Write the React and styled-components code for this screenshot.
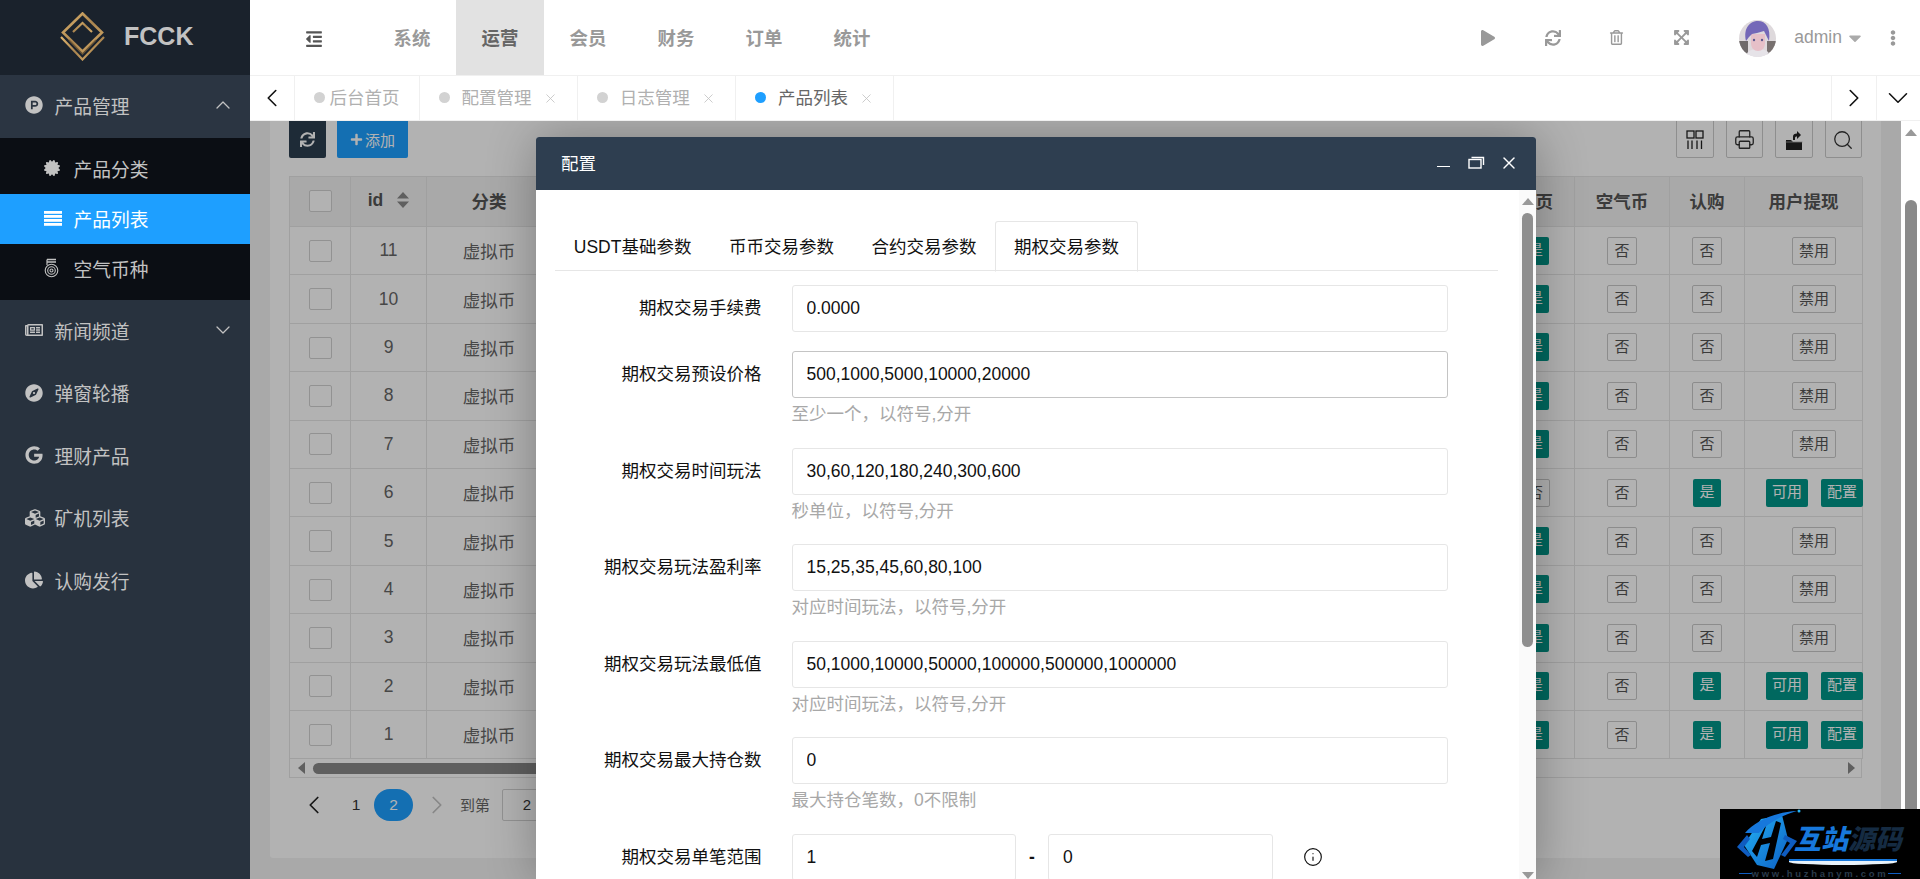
import React from 'react';
import styled, { createGlobalStyle } from 'styled-components';
import { ChevronDown, ChevronLeft, ChevronRight, ChevronUp, Info, Printer, Search, X } from 'lucide-react';
import {
  FaCaretDown,
  FaCertificate,
  FaChartPie,
  FaCompass,
  FaCubes,
  FaEllipsisV,
  FaExpandArrowsAlt,
  FaGoogle,
  FaOutdent,
  FaPlay,
  FaPlus,
  FaProductHunt,
  FaRegNewspaper,
  FaRegTrashAlt,
  FaSync,
} from 'react-icons/fa';

const GlobalStyle = createGlobalStyle`
  html, body {
    margin: 0;
    height: 100%;
    overflow: hidden;
    background: #fff;
  }
  body, input, button {
    font-family: "Liberation Sans", "Noto Sans CJK SC", sans-serif;
  }
  * {
    box-sizing: border-box;
  }
`;

const Shell = styled.div`
  position: relative;
  display: flex;
  width: 1920px;
  height: 879px;
  overflow: hidden;
`;

/* left menu */
const Sidebar = styled.aside`
  flex: 0 0 250px;
  background: #28323e;
  color: #c2c2c2;
`;

const Brand = styled.div`
  display: flex;
  align-items: center;
  height: 75px;
  padding: 0 0 2px 60px;
  background: #1a222c;
`;

const BrandName = styled.span`
  margin-left: 19px;
  font-size: 25px;
  font-weight: 700;
  color: #c2c2c2;
`;

const MenuRow = styled.div`
  display: flex;
  align-items: center;
  height: ${(p) => (p.$open ? '63px' : '62.5px')};
  padding: 0 15px ${(p) => (p.$open ? '3px' : '2px')} 25px;
  font-size: 18.75px;
  background: ${(p) => (p.$open ? '#2b3542' : 'transparent')};
  > svg {
    margin-left: auto;
  }
`;

const MenuIcon = styled.span`
  display: flex;
  align-items: center;
  flex: 0 0 29.5px;
  font-size: 18px;
`;

const SubMenu = styled.div`
  padding: 6px 0;
  background: #0b0e14;
`;

const SubRow = styled.div`
  display: flex;
  align-items: center;
  height: 50px;
  padding: 0 0 2px 44px;
  font-size: 18.75px;
  background: ${(p) => (p.$active ? '#1e9fff' : 'transparent')};
  color: ${(p) => (p.$active ? '#fff' : '#c2c2c2')};
`;

const SubIcon = styled.span`
  display: flex;
  align-items: center;
  flex: 0 0 29.5px;
  font-size: 16px;
`;

/* top bar */
const Main = styled.div`
  display: flex;
  flex: 1;
  flex-direction: column;
  min-width: 0;
`;

const TopBar = styled.header`
  display: flex;
  align-items: center;
  flex: 0 0 75px;
  background: #fff;
`;

const Toggle = styled.div`
  display: flex;
  align-items: center;
  justify-content: center;
  width: 118px;
  padding: 2px 0 0 10px;
  font-size: 18px;
  color: #555;
`;

const NavItem = styled.div`
  display: flex;
  align-items: center;
  justify-content: center;
  width: 88px;
  height: 75px;
  padding-bottom: 1px;
  font-size: 18.4px;
  font-weight: 700;
  color: ${(p) => (p.$active ? '#666' : '#999')};
  background: ${(p) => (p.$active ? '#e2e2e2' : 'transparent')};
`;

const TopTools = styled.div`
  display: flex;
  align-items: center;
  margin-left: auto;
  padding-right: 19px;
  color: #999;
`;

const TopTool = styled.div`
  display: flex;
  align-items: center;
  justify-content: center;
  width: 64.25px;
`;

const AvatarWrap = styled.div`
  display: flex;
  width: 37px;
  height: 37px;
  margin: 2px 18px 0 26px;
`;

const UserName = styled.span`
  font-size: 17.5px;
  color: #999;
`;

const Caret = styled.span`
  display: flex;
  margin: 0 20px 0 3px;
  font-size: 20px;
  color: #aaa;
`;

/* open page tabs */
const TabStrip = styled.nav`
  display: flex;
  align-items: stretch;
  flex: 0 0 46px;
  border-top: 1px solid #f0f0f0;
  border-bottom: 1px solid #f0f0f0;
  background: #fff;
`;

const TabArrow = styled.div`
  display: flex;
  align-items: center;
  justify-content: center;
  width: 44.5px;
  color: #111;
  border-left: ${(p) => (p.$end ? '1px solid #f0f0f0' : 'none')};
  border-right: ${(p) => (p.$end ? 'none' : '1px solid #f0f0f0')};
`;

const PageTab = styled.div`
  display: flex;
  align-items: center;
  padding: 0 19px 3px;
  font-size: 17.5px;
  color: ${(p) => (p.$active ? '#666' : '#b0b0b0')};
  border-right: 1px solid #f0f0f0;
`;

const TabDot = styled.i`
  width: 11px;
  height: 11px;
  margin: 2px ${(p) => (p.$tight ? '5px' : '12px')} 0 0;
  border-radius: 50%;
  background: ${(p) => (p.$active ? '#1e9fff' : '#d2d2d2')};
`;

const TabClose = styled.span`
  display: flex;
  margin: 3px 0 0 11.3px;
  color: #c2c2c2;
`;

const TabGap = styled.div`
  flex: 1;
`;

/* content behind the dialog */
const Frame = styled.div`
  position: relative;
  flex: 1;
  display: flex;
  min-height: 0;
  overflow: hidden;
  background: #f2f2f2;
`;

const PageArea = styled.div`
  display: flex;
  flex: 1;
  flex-direction: column;
  min-width: 0;
  padding: 0 20px 21px;
`;

const Card = styled.section`
  flex: 1;
  margin-top: -8px;
  padding: 0 19px;
  border-radius: 3px;
  background: #fff;
`;

const Toolbar = styled.div`
  display: flex;
  align-items: center;
  height: 45px;
  margin-bottom: 18px;
`;

const RefreshBtn = styled.button`
  display: flex;
  align-items: center;
  justify-content: center;
  width: 37px;
  height: 45px;
  padding: 8px 0 0;
  border: 0;
  border-radius: 2px;
  font-size: 15px;
  color: #fff;
  background: #2c3e50;
`;

const AddBtn = styled.button`
  display: flex;
  align-items: center;
  justify-content: center;
  width: 71px;
  height: 45px;
  margin-left: 11px;
  padding: 8px 0 0;
  border: 0;
  border-radius: 2px;
  font-size: 15px;
  color: #fff;
  background: #1e9fff;
  svg {
    margin-right: 2px;
    font-size: 13px;
  }
`;

const ToolGroup = styled.div`
  display: flex;
  gap: 12px;
  margin-left: auto;
`;

const ToolBtn = styled.div`
  display: flex;
  align-items: center;
  justify-content: center;
  width: 37.5px;
  height: 45px;
  padding-top: 8px;
  border: 1px solid #ccc;
  border-radius: 2px;
  color: #333;
`;

const TableBox = styled.div`
  width: 1573px;
  border-top: 1px solid #e6e6e6;
`;

const Table = styled.table`
  width: 1573px;
  table-layout: fixed;
  border-collapse: collapse;
`;

const HeadCell = styled.th`
  height: 49.5px;
  padding: 0 0 2px;
  font-size: 17.5px;
  font-weight: 700;
  color: #555;
  text-align: center;
  background: #f2f2f2;
  border: 1px solid #e6e6e6;
  border-top: 0;
`;

const Cell = styled.td`
  height: 48.4px;
  padding: 0 0 0 ${(p) => (p.$action ? '21px' : '0')};
  font-size: 17.5px;
  color: #666;
  text-align: center;
  white-space: nowrap;
  border: 1px solid #e6e6e6;
`;

const Check = styled.i`
  display: inline-block;
  width: 23px;
  height: 22px;
  vertical-align: middle;
  border: 1px solid #d2d2d2;
  border-radius: 2px;
  background: #fff;
`;

const SortMark = styled.svg`
  width: 12px;
  height: 16px;
  margin-left: 14px;
  vertical-align: -2px;
`;

const Tag = styled.span`
  display: inline-block;
  height: 28px;
  padding: 0 6px;
  font-size: 15px;
  line-height: 26px;
  border-radius: 2px;
  color: ${(p) => (p.$on ? '#fff' : '#555')};
  background: ${(p) => (p.$on ? '#009688' : 'transparent')};
  border: ${(p) => (p.$on ? '0' : '1px solid #c9c9c9')};
  & + & {
    margin-left: 13px;
  }
`;

const HScroll = styled.div`
  display: flex;
  align-items: center;
  height: 19px;
  padding: 0 6px 0 8px;
  border: 1px solid #e6e6e6;
  border-top: 0;
`;

const ArrowLeft = styled.i`
  border-style: solid;
  border-width: 6px 7px 6px 0;
  border-color: transparent #888 transparent transparent;
`;

const ArrowRight = styled.i`
  margin-left: auto;
  border-style: solid;
  border-width: 6px 0 6px 7px;
  border-color: transparent transparent transparent #888;
`;

const HThumb = styled.div`
  width: 900px;
  height: 11px;
  margin-left: 8px;
  border-radius: 6px;
  background: #888;
`;

const Pager = styled.div`
  display: flex;
  align-items: center;
  height: 33px;
  margin-top: 10px;
  padding-left: 10px;
  font-size: 15px;
  color: #666;
`;

const PageNo = styled.span`
  display: flex;
  align-items: center;
  justify-content: center;
  width: ${(p) => (p.$current ? '39px' : '36px')};
  height: 32px;
  margin-left: ${(p) => (p.$current ? '0' : '9px')};
  border-radius: 16px;
  font-size: 15.5px;
  color: ${(p) => (p.$current ? '#fff' : '#333')};
  background: ${(p) => (p.$current ? '#1e9fff' : 'transparent')};
`;

const PagerNext = styled.span`
  display: flex;
  margin-left: 9px;
  color: #c2c2c2;
`;

const PagerLabel = styled.span`
  margin: 0 12px 0 8px;
  color: #666;
`;

const PagerInput = styled.span`
  display: flex;
  align-items: center;
  justify-content: center;
  width: 50px;
  height: 32px;
  border: 1px solid #d2d2d2;
  border-radius: 2px;
  color: #333;
`;

const PageBar = styled.div`
  position: relative;
  z-index: 3;
  display: flex;
  flex-direction: column;
  align-items: center;
  flex: 0 0 19px;
  padding-top: 8px;
  background: #fff;
`;

const BarArrowUp = styled.i`
  flex: none;
  border-style: solid;
  border-width: 0 6.5px 7px;
  border-color: transparent transparent #999;
`;

const BarArrowDown = styled.i`
  flex: none;
  margin-top: auto;
  border-style: solid;
  border-width: 7px 6.5px 0;
  border-color: #999 transparent transparent;
`;

const PageThumb = styled.div`
  flex: 1;
  width: 12px;
  margin: 64px 0 0 1px;
  border-radius: 6px 6px 0 0;
  background: #8a8a8a;
`;

const Shade = styled.div`
  position: absolute;
  inset: 0;
  z-index: 1;
  background: rgba(0, 0, 0, 0.3);
`;

/* dialog */
const Dialog = styled.div`
  position: absolute;
  top: 16px;
  left: 286px;
  z-index: 2;
  display: flex;
  flex-direction: column;
  width: 1000px;
  height: 742px;
  border-radius: 3px 3px 0 0;
  background: #fff;
  box-shadow: 1px 1px 50px rgba(0, 0, 0, 0.3);
`;

const DialogHead = styled.div`
  display: flex;
  align-items: center;
  flex: 0 0 53px;
  padding: 0 17px 2px 25px;
  font-size: 17.5px;
  color: #fff;
  border-radius: 3px 3px 0 0;
  background: #2e3e50;
`;

const DialogTools = styled.div`
  display: flex;
  align-items: center;
  margin-left: auto;
`;

const MinLine = styled.i`
  width: 13px;
  height: 1.5px;
  margin: 8px 18px 0 0;
  background: #fff;
`;

const DialogBody = styled.div`
  display: flex;
  flex: 1;
  min-height: 0;
`;

const DialogScroll = styled.div`
  flex: 1;
  min-width: 0;
  padding: 31px 21px 0 19px;
  overflow: hidden;
`;

const DialogBar = styled.div`
  display: flex;
  flex-direction: column;
  align-items: center;
  flex: 0 0 17px;
  padding: 8px 0 0;
  background: #fafafa;
`;

const DialogThumb = styled.div`
  flex: none;
  width: 11px;
  height: 434px;
  margin-top: 8px;
  border-radius: 6px;
  background: #8f8f8f;
`;

const FormTabs = styled.div`
  display: flex;
  height: 50px;
  border-bottom: 1px solid #e6e6e6;
`;

const FormTab = styled.div`
  display: flex;
  align-items: center;
  justify-content: center;
  height: 51px;
  padding: 0 17.75px 3px;
  font-size: 17.5px;
  color: #111;
  border: 1px solid ${(p) => (p.$active ? '#e6e6e6' : 'transparent')};
  border-bottom-color: ${(p) => (p.$active ? '#fff' : 'transparent')};
  border-radius: 3px 3px 0 0;
`;

const Form = styled.div`
  padding-top: 14px;
`;

const FormRow = styled.div`
  display: grid;
  grid-template-columns: 206.5px 656px;
  column-gap: 30px;
  margin-bottom: 19px;
`;

const FormLabel = styled.label`
  height: 47px;
  font-size: 17.5px;
  line-height: 46px;
  color: #111;
  text-align: right;
`;

const FieldInput = styled.input`
  display: block;
  width: ${(p) => (p.$half ? '224.5px' : '100%')};
  height: 47px;
  padding: 0 14px;
  font-size: 17.5px;
  color: #111;
  border: 1px solid ${(p) => (p.$focus ? '#c4c4c4' : '#e6e6e6')};
  border-radius: 3px;
  outline: 0;
  background: #fff;
`;

const FieldHelp = styled.div`
  height: 30.5px;
  font-size: 17.5px;
  line-height: 32px;
  color: #a8a8a8;
`;

const RangeWrap = styled.div`
  display: flex;
  align-items: center;
  width: 700px;
  color: #111;
`;

const RangeDash = styled.span`
  flex: 0 0 32px;
  font-size: 17.5px;
  font-weight: 700;
  text-align: center;
`;

const RangeInfo = styled.span`
  display: flex;
  margin-left: 30px;
`;

/* corner stamp */
const Stamp = styled.div`
  position: absolute;
  right: 0;
  bottom: 0;
  z-index: 9;
  width: 200px;
  height: 70px;
  background: #000;
`;

const StampMark = styled.svg`
  position: absolute;
  top: 0;
  left: 15px;
  width: 66px;
  height: 64px;
`;

const StampTitle = styled.div`
  position: absolute;
  top: 15px;
  left: 74px;
  font-size: 27px;
  line-height: 32px;
  font-weight: 900;
  font-style: italic;
  white-space: nowrap;
  color: #152b42;
  b {
    color: #1778dc;
    font-weight: 900;
  }
`;

const StampSwoosh = styled.div`
  position: absolute;
  top: 50px;
  left: 69px;
  width: 108px;
  height: 6px;
  border-radius: 0 0 50% 50%;
  border-top: 2px solid #1778dc;
  background: #e9f3fb;
`;

const StampUrl = styled.div`
  position: absolute;
  left: 19px;
  right: 19px;
  bottom: 0;
  display: flex;
  align-items: center;
  justify-content: space-between;
  height: 11px;
  font-size: 9.5px;
  font-weight: 700;
  letter-spacing: 2.7px;
  white-space: nowrap;
  color: #2a3b4b;
  &::before,
  &::after {
    content: '';
    width: 16px;
    height: 1.5px;
    background: #0f5cc0;
  }
`;

const ROWS = [
  { id: 11 }, { id: 10 }, { id: 9 }, { id: 8 }, { id: 7 },
  { id: 6, on: true, homeOff: true },
  { id: 5 }, { id: 4 }, { id: 3 },
  { id: 2, on: true }, { id: 1, on: true },
];

const FIELDS = [
  { label: '期权交易手续费', value: '0.0000' },
  { label: '期权交易预设价格', value: '500,1000,5000,10000,20000', help: '至少一个，以符号,分开', focus: true },
  { label: '期权交易时间玩法', value: '30,60,120,180,240,300,600', help: '秒单位，以符号,分开' },
  { label: '期权交易玩法盈利率', value: '15,25,35,45,60,80,100', help: '对应时间玩法，以符号,分开' },
  { label: '期权交易玩法最低值', value: '50,1000,10000,50000,100000,500000,1000000', help: '对应时间玩法，以符号,分开' },
  { label: '期权交易最大持仓数', value: '0', help: '最大持仓笔数，0不限制' },
];

const NAV = ['系统', '运营', '会员', '财务', '订单', '统计'];

const LogoMark = () => (
  <svg width="45" height="49" viewBox="0 0 45 49" fill="none">
    <defs>
      <linearGradient id="gold" x1="0" y1="0" x2="1" y2="1">
        <stop offset="0" stopColor="#e0b56e" />
        <stop offset="0.5" stopColor="#a9844f" />
        <stop offset="1" stopColor="#d8ad68" />
      </linearGradient>
    </defs>
    <path d="M22.5 1.5 42 20.5 22.5 39.5 3 20.5Z" stroke="url(#gold)" strokeWidth="2.6" />
    <path d="M13 20 22.5 11 32 20" stroke="url(#gold)" strokeWidth="2.2" />
    <path d="M1 25 22.5 47.5 44 25" stroke="url(#gold)" strokeWidth="2.2" />
    <path d="M9 28 22.5 42 36 28" stroke="#6f5836" strokeWidth="1.4" />
  </svg>
);

const ListIcon = () => (
  <svg width="18" height="15" viewBox="0 0 18 15" fill="currentColor">
    <rect width="18" height="2.8" />
    <rect y="4" width="18" height="2.8" />
    <rect y="8" width="18" height="2.8" />
    <rect y="12" width="18" height="2.8" />
  </svg>
);

const AirIcon = () => (
  <svg width="15" height="20" viewBox="0 0 15 20" fill="none" stroke="currentColor">
    <path d="M3 1.5h9M3 4h9" strokeWidth="1.4" />
    <path d="M3 1.5V7" strokeWidth="1.2" />
    <circle cx="7.5" cy="12.5" r="6.3" strokeWidth="1.1" />
    <circle cx="7.5" cy="12.5" r="3.8" strokeWidth="1.1" />
    <circle cx="7.5" cy="12.5" r="1.5" strokeWidth="1.1" />
  </svg>
);

const Avatar = () => (
  <svg width="37" height="37" viewBox="0 0 37 37">
    <defs>
      <clipPath id="ava">
        <circle cx="18.5" cy="18.5" r="18.5" />
      </clipPath>
    </defs>
    <g clipPath="url(#ava)">
      <rect width="37" height="37" fill="#ded9dc" />
      <rect y="21" width="9" height="16" fill="#6f6a6a" />
      <rect x="28" y="21" width="9" height="16" fill="#77706f" />
      <path d="M7 37c0-6 6-8 12-8s12 2 12 8Z" fill="#e6e3e8" />
      <path d="M12 14h14v9c0 5-3 8-7 8s-7-3-7-8Z" fill="#e6c0c8" />
      <path d="M7 21C4 8 11 1 19 1s13 7 11 20l-3-6-2-4-7 2-5 1-3 3Z" fill="#7468b8" />
      <circle cx="15" cy="20" r="1.2" fill="#5d5a8e" />
      <circle cx="23" cy="20" r="1.2" fill="#5d5a8e" />
    </g>
  </svg>
);

const ColumnsIcon = () => (
  <svg width="18" height="20" viewBox="0 0 18 20" fill="none" stroke="#222" strokeWidth="1.3">
    <rect x="1" y="1" width="7" height="7" />
    <rect x="10" y="1" width="7" height="7" />
    <path d="M2 10.5V19M6 10.5V19M11 10.5V19M15.5 10.5V19" />
  </svg>
);

const ExportIcon = () => (
  <svg width="18" height="22" viewBox="0 0 18 22" fill="#222">
    <path d="M1 11h5l2 2h9v8H1Z" />
    <path d="M8 11V7.5c0-2 1.5-3 4-3V2l4 4-4 4V7.5c-1.5 0-2 .5-2 2V11Z" />
    <path d="M0.5 13h17" stroke="#aaa" strokeWidth="0.8" />
  </svg>
);

const MaxIcon = () => (
  <svg width="17" height="13" viewBox="0 0 17 13" fill="none" stroke="#fff" strokeWidth="1.4" style={{ marginRight: 14 }}>
    <rect x="1" y="3.5" width="12" height="8.5" />
    <path d="M3.5 1.5h12v7.5" />
  </svg>
);

const App = () => (
  <Shell>
    <GlobalStyle />
    <Sidebar>
      <Brand>
        <LogoMark />
        <BrandName>FCCK</BrandName>
      </Brand>
      <MenuRow $open>
        <MenuIcon><FaProductHunt /></MenuIcon>
        产品管理
        <ChevronUp size={24} strokeWidth={1.3} />
      </MenuRow>
      <SubMenu>
        <SubRow><SubIcon><FaCertificate /></SubIcon>产品分类</SubRow>
        <SubRow $active><SubIcon><ListIcon /></SubIcon>产品列表</SubRow>
        <SubRow><SubIcon><AirIcon /></SubIcon>空气币种</SubRow>
      </SubMenu>
      <MenuRow>
        <MenuIcon><FaRegNewspaper /></MenuIcon>
        新闻频道
        <ChevronDown size={24} strokeWidth={1.3} />
      </MenuRow>
      <MenuRow>
        <MenuIcon><FaCompass /></MenuIcon>
        弹窗轮播
      </MenuRow>
      <MenuRow>
        <MenuIcon><FaGoogle /></MenuIcon>
        理财产品
      </MenuRow>
      <MenuRow>
        <MenuIcon><FaCubes size={20} /></MenuIcon>
        矿机列表
      </MenuRow>
      <MenuRow>
        <MenuIcon><FaChartPie /></MenuIcon>
        认购发行
      </MenuRow>
    </Sidebar>

    <Main>
      <TopBar>
        <Toggle><FaOutdent /></Toggle>
        {NAV.map((name) => (
          <NavItem key={name} $active={name === '运营'}>{name}</NavItem>
        ))}
        <TopTools>
          <TopTool><FaPlay size={16} /></TopTool>
          <TopTool><FaSync size={16} /></TopTool>
          <TopTool><FaRegTrashAlt size={15} /></TopTool>
          <TopTool><FaExpandArrowsAlt size={17} /></TopTool>
          <AvatarWrap><Avatar /></AvatarWrap>
          <UserName>admin</UserName>
          <Caret><FaCaretDown /></Caret>
          <FaEllipsisV size={16} />
        </TopTools>
      </TopBar>

      <TabStrip>
        <TabArrow><ChevronLeft size={30} strokeWidth={1.3} /></TabArrow>
        <PageTab><TabDot $tight />后台首页</PageTab>
        <PageTab><TabDot />配置管理<TabClose><X size={15} strokeWidth={1.3} /></TabClose></PageTab>
        <PageTab><TabDot />日志管理<TabClose><X size={15} strokeWidth={1.3} /></TabClose></PageTab>
        <PageTab $active><TabDot $active />产品列表<TabClose><X size={15} strokeWidth={1.3} /></TabClose></PageTab>
        <TabGap />
        <TabArrow $end><ChevronRight size={30} strokeWidth={1.3} /></TabArrow>
        <TabArrow $end><ChevronDown size={34} strokeWidth={1.1} /></TabArrow>
      </TabStrip>

      <Frame>
        <PageArea>
          <Card>
            <Toolbar>
              <RefreshBtn><FaSync /></RefreshBtn>
              <AddBtn><FaPlus />添加</AddBtn>
              <ToolGroup>
                <ToolBtn><ColumnsIcon /></ToolBtn>
                <ToolBtn><Printer size={21} strokeWidth={1.5} /></ToolBtn>
                <ToolBtn><ExportIcon /></ToolBtn>
                <ToolBtn><Search size={22} strokeWidth={1.4} /></ToolBtn>
              </ToolGroup>
            </Toolbar>
            <TableBox>
              <Table>
                <colgroup>
                  <col width="61" />
                  <col width="76" />
                  <col width="125" />
                  <col width="945" />
                  <col width="78" />
                  <col width="95" />
                  <col width="75" />
                  <col width="118" />
                </colgroup>
                <thead>
                  <tr>
                    <HeadCell><Check /></HeadCell>
                    <HeadCell>
                      id
                      <SortMark viewBox="0 0 12 16" fill="#888">
                        <path d="M6 0 12 6.5H0ZM6 16 0 9.5H12Z" />
                      </SortMark>
                    </HeadCell>
                    <HeadCell>分类</HeadCell>
                    <HeadCell />
                    <HeadCell>首页</HeadCell>
                    <HeadCell>空气币</HeadCell>
                    <HeadCell>认购</HeadCell>
                    <HeadCell>用户提现</HeadCell>
                  </tr>
                </thead>
                <tbody>
                  {ROWS.map((row) => (
                    <tr key={row.id}>
                      <Cell><Check /></Cell>
                      <Cell>{row.id}</Cell>
                      <Cell>虚拟币</Cell>
                      <Cell />
                      <Cell><Tag $on={!row.homeOff}>{row.homeOff ? '否' : '是'}</Tag></Cell>
                      <Cell><Tag>否</Tag></Cell>
                      <Cell><Tag $on={row.on}>{row.on ? '是' : '否'}</Tag></Cell>
                      <Cell $action>
                        {row.on ? (
                          <>
                            <Tag $on>可用</Tag>
                            <Tag $on>配置</Tag>
                          </>
                        ) : (
                          <Tag>禁用</Tag>
                        )}
                      </Cell>
                    </tr>
                  ))}
                </tbody>
              </Table>
              <HScroll>
                <ArrowLeft />
                <HThumb />
                <ArrowRight />
              </HScroll>
            </TableBox>
            <Pager>
              <ChevronLeft size={30} strokeWidth={1.4} color="#222" />
              <PageNo>1</PageNo>
              <PageNo $current>2</PageNo>
              <PagerNext><ChevronRight size={30} strokeWidth={1.4} /></PagerNext>
              <PagerLabel>到第</PagerLabel>
              <PagerInput>2</PagerInput>
            </Pager>
          </Card>
        </PageArea>

        <PageBar>
          <BarArrowUp />
          <PageThumb />
        </PageBar>

        <Shade />

        <Dialog>
          <DialogHead>
            配置
            <DialogTools>
              <MinLine />
              <MaxIcon />
              <X size={20} strokeWidth={1.7} />
            </DialogTools>
          </DialogHead>
          <DialogBody>
            <DialogScroll>
              <FormTabs>
                <FormTab>USDT基础参数</FormTab>
                <FormTab>币币交易参数</FormTab>
                <FormTab>合约交易参数</FormTab>
                <FormTab $active>期权交易参数</FormTab>
              </FormTabs>
              <Form>
                {FIELDS.map((field) => (
                  <FormRow key={field.label}>
                    <FormLabel>{field.label}</FormLabel>
                    <div>
                      <FieldInput readOnly value={field.value} $focus={field.focus} />
                      {field.help && <FieldHelp>{field.help}</FieldHelp>}
                    </div>
                  </FormRow>
                ))}
                <FormRow>
                  <FormLabel>期权交易单笔范围</FormLabel>
                  <RangeWrap>
                    <FieldInput readOnly value="1" $half />
                    <RangeDash>-</RangeDash>
                    <FieldInput readOnly value="0" $half />
                    <RangeInfo><Info size={20} strokeWidth={1.4} /></RangeInfo>
                  </RangeWrap>
                </FormRow>
              </Form>
            </DialogScroll>
            <DialogBar>
              <BarArrowUp />
              <DialogThumb />
              <BarArrowDown />
            </DialogBar>
          </DialogBody>
        </Dialog>
      </Frame>
    </Main>

    <Stamp>
      <StampMark viewBox="0 0 66 64" fill="none">
        <defs>
          <linearGradient id="stamp" x1="0" y1="0" x2="1" y2="1">
            <stop offset="0" stopColor="#25b4f5" />
            <stop offset="1" stopColor="#0c5fc4" />
          </linearGradient>
        </defs>
        <path d="M26 10 47 6 53 30 39 60 22 56 9 36Z" fill="url(#stamp)" />
        <path d="M32 14 27 30 36 28 41 12 46 14 38 50 30 52 35 34 26 36 22 48 17 42Z" fill="#000" />
        <path d="M2 38 12 26 15 30 9 38 16 46 13 48Z" fill="#0f5cc0" />
        <path d="M62 32 50 26 48 30 55 34 46 46 50 48Z" fill="#0f5cc0" />
        <path d="M10 24C20 12 40 3 62 2 48 6 34 13 24 24Z" fill="#1778dc" />
        <circle cx="64" cy="2" r="1.5" fill="#25b4f5" />
      </StampMark>
      <StampTitle><b>互站</b>源码</StampTitle>
      <StampSwoosh />
      <StampUrl>www.huzhanym.com</StampUrl>
    </Stamp>
  </Shell>
);

export default App;
